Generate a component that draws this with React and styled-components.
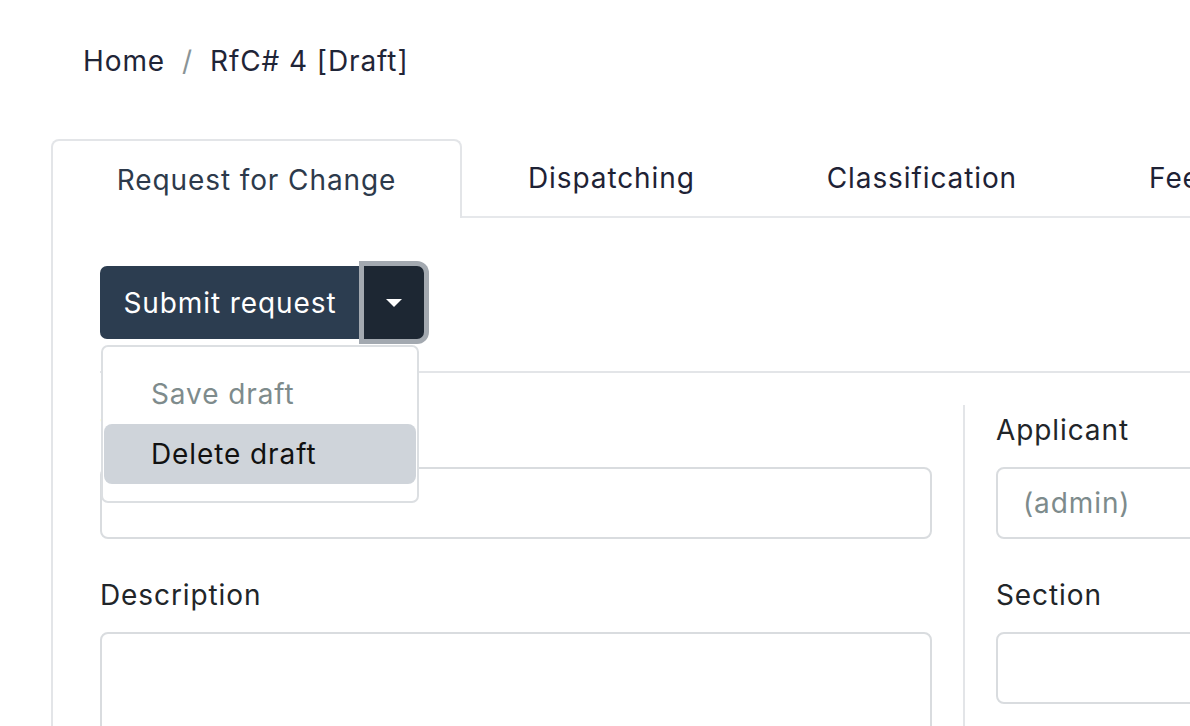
import React from "react";
import styled, { createGlobalStyle } from "styled-components";

const GlobalStyle = createGlobalStyle`
  html, body {
    margin: 0;
    padding: 0;
    background: #fff;
    overflow: hidden;
  }
  body {
    font-family: Inter, "Noto Sans", "Liberation Sans", sans-serif;
    letter-spacing: 0.9px;
    color: #212529;
  }
`;

const Page = styled.div`
  width: 1500px;
  padding-top: 40px;
`;

const Breadcrumb = styled.nav`
  display: flex;
  align-items: center;
  gap: 17px;
  padding-left: 83px;
  font-size: 28px;
  line-height: 42px;
  color: #1f2537;
`;

const Crumb = styled.span`
  color: ${(p) => (p.$muted ? "#8a9496" : "#1f2537")};
`;

const Card = styled.div`
  margin: 57px 0 0 51px;
  width: 1440px;
`;

const TabBar = styled.div`
  display: flex;
  height: 79px;
  border-bottom: 2px solid #e6e8eb;
  box-sizing: border-box;
`;

const Tab = styled.div`
  display: flex;
  align-items: center;
  justify-content: center;
  padding: 0 66px;
  font-size: 28px;
  white-space: nowrap;
  color: ${(p) => (p.$active ? "#2d3a4b" : "#1e2235")};
  background: #fff;
  ${(p) =>
    p.$active &&
    `
    border: 2px solid #e3e5e8;
    border-bottom: none;
    border-radius: 8px 8px 0 0;
    margin-bottom: -2px;
    width: 411px;
    box-sizing: border-box;
  `}
`;

const Body = styled.div`
  border-left: 2px solid #e3e5e8;
  padding: 48px 0 0 47px;
  min-height: 600px;
`;

const Toolbar = styled.div`
  position: relative;
  display: flex;
  align-items: stretch;
  height: 73px;
  padding-bottom: 32px;
  border-bottom: 2px solid #e3e5e8;
`;

const MainButton = styled.button`
  width: 260px;
  border: none;
  border-radius: 7px 0 0 7px;
  background: #2c3d50;
  color: #fff;
  font-family: inherit;
  letter-spacing: inherit;
  font-size: 28px;
  padding: 0;
`;

const ToggleButton = styled.button`
  width: 60px;
  margin-left: 4px;
  border: none;
  border-radius: 0 7px 7px 0;
  background: #1d2733;
  box-shadow: 0 0 0 5px #a3a9b0;
  display: flex;
  align-items: center;
  justify-content: center;
  padding: 0;
`;

const Caret = styled.span`
  width: 0;
  height: 0;
  border-left: 8px solid transparent;
  border-right: 8px solid transparent;
  border-top: 8px solid #fff;
`;

const Menu = styled.div`
  position: absolute;
  top: 79px;
  left: 1px;
  width: 318px;
  box-sizing: border-box;
  padding: 17px 0;
  background: #fff;
  border: 2px solid #dcdfe2;
  border-radius: 7px;
  z-index: 2;
`;

const MenuItem = styled.div`
  height: 60px;
  display: flex;
  align-items: center;
  padding-left: 47px;
  margin: 0 1px;
  font-size: 28px;
  border-radius: 8px;
  color: ${(p) => (p.$disabled ? "#7e8b8c" : "#111")};
  background: ${(p) => (p.$active ? "#cfd4da" : "transparent")};
`;

const Columns = styled.div`
  display: grid;
  grid-template-columns: 832px 64px 420px;
  padding-top: 32px;
`;

const Divider = styled.div`
  justify-self: center;
  width: 2px;
  background: #e3e5e8;
`;

const Column = styled.div`
  padding-top: 4px;
`;

const Field = styled.div`
  margin-bottom: 35px;
`;

const Label = styled.label`
  display: block;
  font-size: 28px;
  line-height: 42px;
  margin-bottom: 16px;
  color: #212529;
`;

const Input = styled.div`
  height: 72px;
  box-sizing: border-box;
  border: 2px solid #d9dcdf;
  border-radius: 8px;
  display: flex;
  align-items: center;
  padding-left: 25px;
  font-size: 28px;
  color: #7d8b8c;
`;

const TextArea = styled(Input)`
  height: 160px;
`;

export default function App() {
  return (
    <>
      <GlobalStyle />
      <Page>
        <Breadcrumb>
          <Crumb>Home</Crumb>
          <Crumb $muted>/</Crumb>
          <Crumb>RfC# 4 [Draft]</Crumb>
        </Breadcrumb>
        <Card>
          <TabBar>
            <Tab $active>Request for Change</Tab>
            <Tab>Dispatching</Tab>
            <Tab>Classification</Tab>
            <Tab>Feedback</Tab>
          </TabBar>
          <Body>
            <Toolbar>
              <MainButton>Submit request</MainButton>
              <ToggleButton>
                <Caret />
              </ToggleButton>
              <Menu>
                <MenuItem $disabled>Save draft</MenuItem>
                <MenuItem $active>Delete draft</MenuItem>
              </Menu>
            </Toolbar>
            <Columns>
              <Column>
                <Field>
                  <Label>Title</Label>
                  <Input />
                </Field>
                <Field>
                  <Label>Description</Label>
                  <TextArea />
                </Field>
              </Column>
              <Divider />
              <Column>
                <Field>
                  <Label>Applicant</Label>
                  <Input>(admin)</Input>
                </Field>
                <Field>
                  <Label>Section</Label>
                  <Input />
                </Field>
              </Column>
            </Columns>
          </Body>
        </Card>
      </Page>
    </>
  );
}
